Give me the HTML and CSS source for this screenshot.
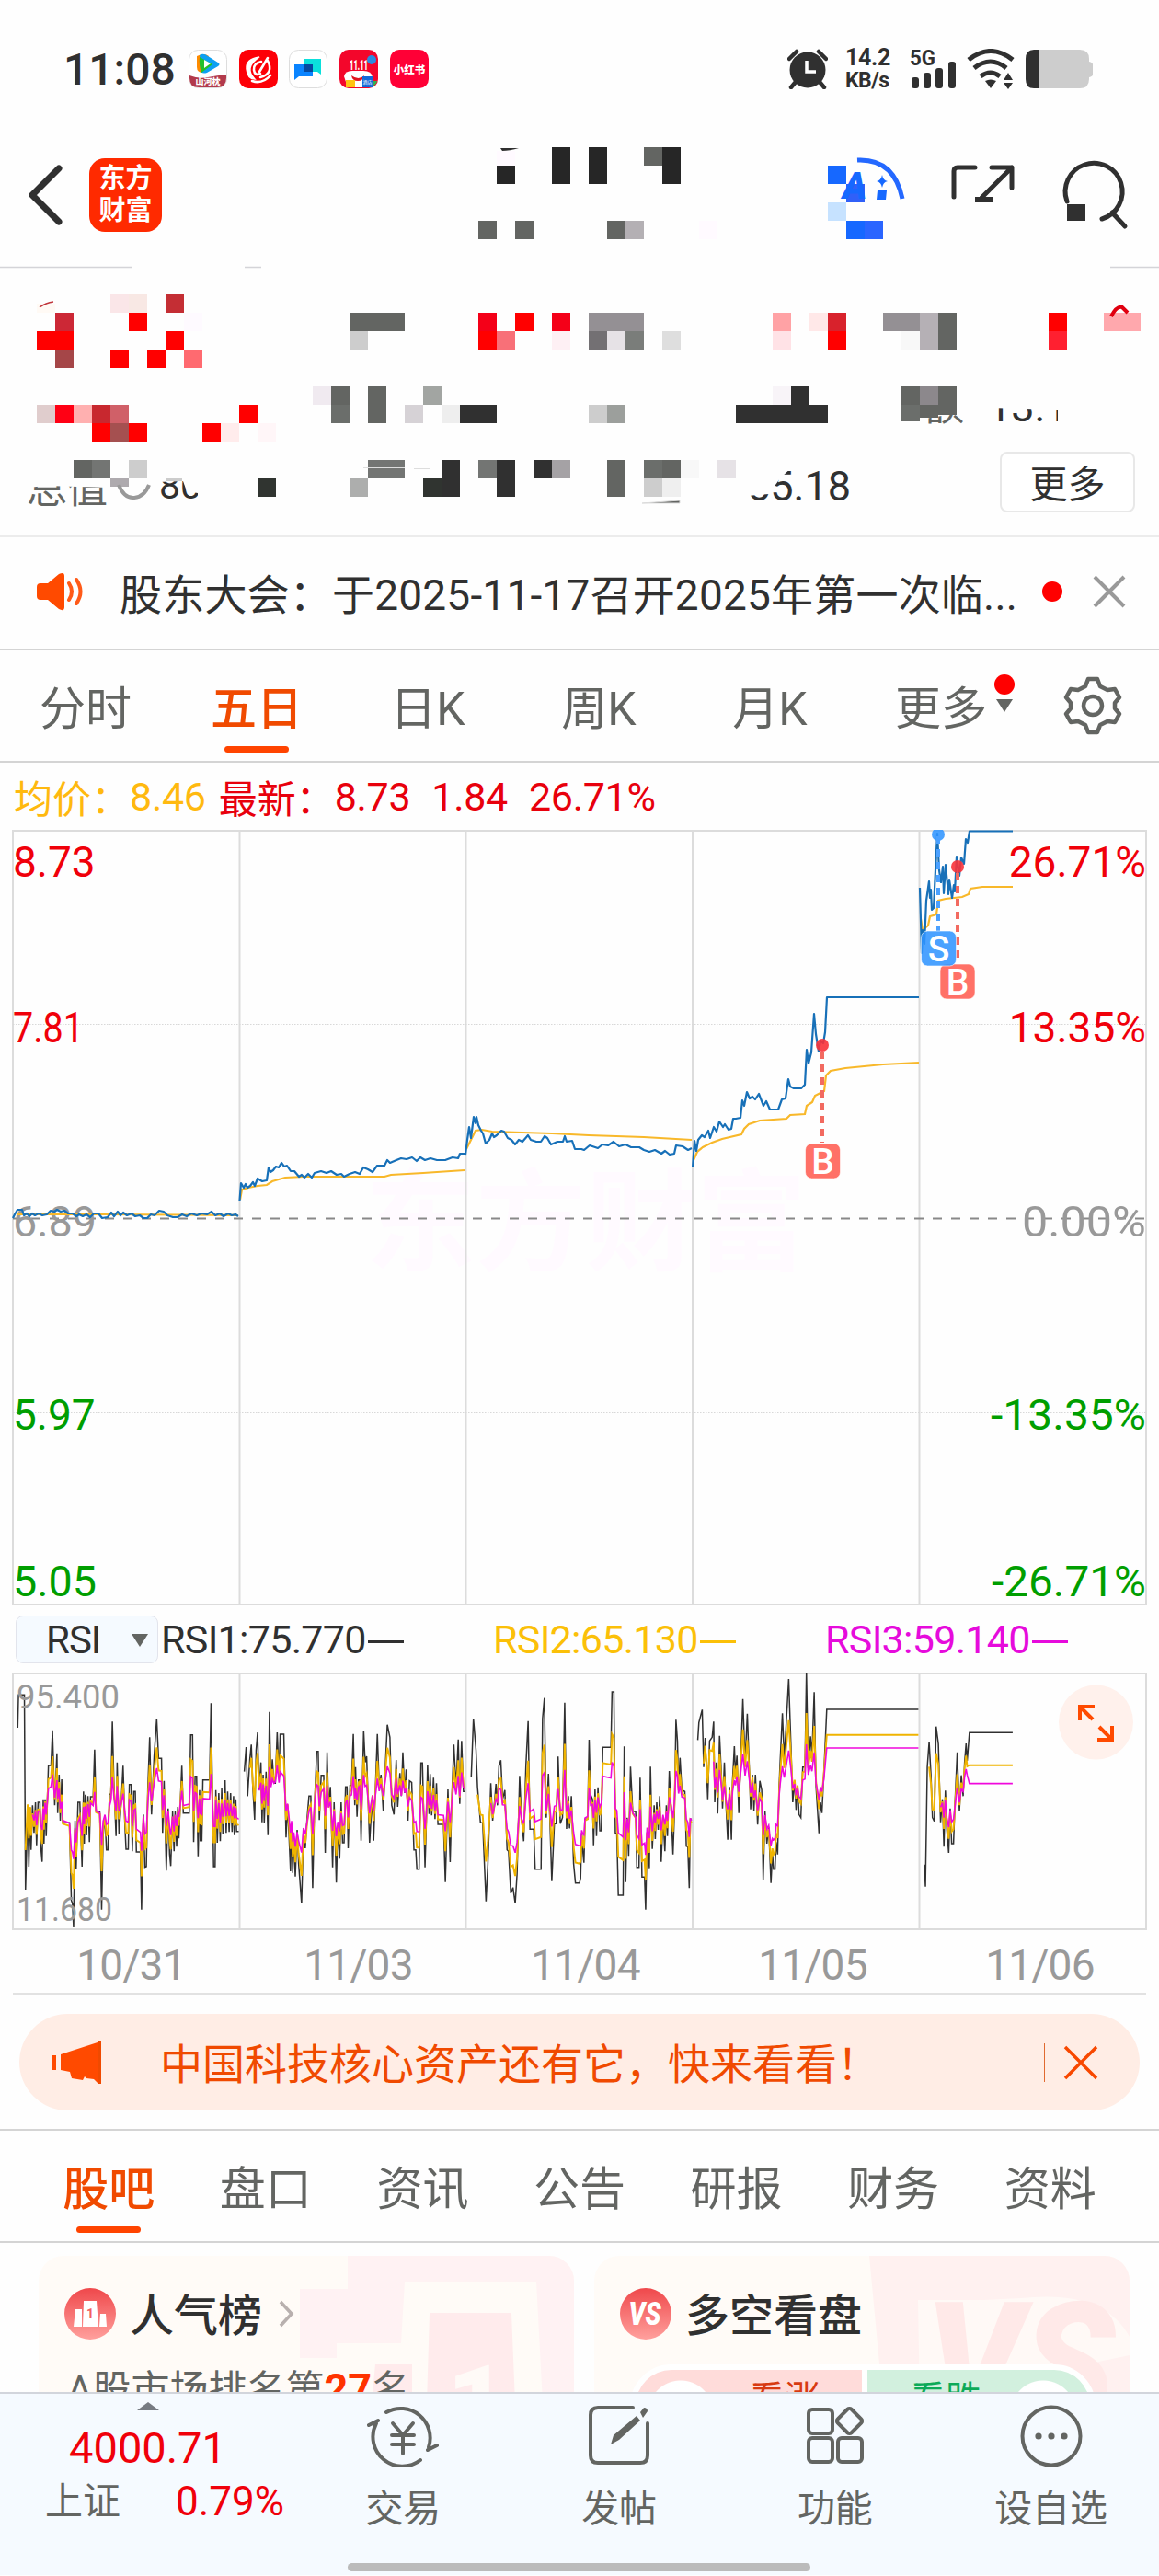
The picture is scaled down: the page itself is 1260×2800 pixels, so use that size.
FILE: index.html
```html
<!DOCTYPE html>
<html lang="zh-CN">
  <head>
    <meta charset="UTF-8" />
    <meta name="viewport" content="width=device-width, initial-scale=1.0" />
    <title>东方财富</title>
    <link rel="stylesheet" href="styles.css">
  </head>
  <body>
    <!-- status bar -->
    <div class="status">
      <span class="time">11:08</span>
      <div class="apps">
        <svg class="app" viewBox="0 0 42 42">
          <rect x=".5" y=".5" width="41" height="41" rx="10" fill="#fff" stroke="#ddd" />
          <path d="M1 28q10 4 20 2t20-3v4q0 10-10 10H11Q1 41 1 31z" fill="#b23a4c" />
          <path d="M9 7q8-4 13 0l-6 18q-7 0-7-6z" fill="#ff8a00" />
          <path d="M12 6q4-3 9 1l11 7q3 2 0 4l-12 7q-7 2-7-4z" fill="#0da0f2" />
          <path d="M12 8l14 8-12 9q-3-9-2-17z" fill="#22c02c" />
          <path d="M17 11l7 4-7 5z" fill="#fff" />
          <text x="21" y="38" text-anchor="middle" font-size="9" font-weight="900" fill="#fff">山河枕</text>
        </svg>
        <svg class="app" viewBox="0 0 42 42">
          <rect width="42" height="42" rx="10" fill="#fd0007" />
          <path d="M22 8Q7 10 8 21t9 11q-6-6-5-12T22 8z" fill="#fff" stroke="#fff" stroke-width="1.500" />
          <path d="M31 12q7 14-8 18M14 34q11 4 20-6M31 9L22 24M24 13q-9 2-8 9t7 4" fill="none" stroke="#fff" stroke-width="2.600" stroke-linecap="round" />
        </svg>
        <svg class="app" viewBox="0 0 42 42">
          <rect x=".5" y=".5" width="41" height="41" rx="10" fill="#fff" stroke="#ddd" />
          <path d="M16 10h19v17l-4-3H16z" fill="#0be0dc" />
          <path d="M6 16h20v13H11l-5 4z" fill="#0a84ff" />
          <rect x="16" y="16" width="10" height="8" fill="#0549a0" />
        </svg>
        <svg class="app" viewBox="0 0 42 42">
          <rect width="42" height="42" rx="10" fill="#f3062b" />
          <circle cx="35" cy="11" r="5" fill="#2a8be0" />
          <path d="M5 29q1-6 9-6h12q9 0 10 7l-3 11H9z" fill="#fff" />
          <path d="M13 28q8 6 14 0q-1 6-7 6t-7-6z" fill="#e0151f" />
          <text x="21" y="22" text-anchor="middle" font-size="14" font-weight="900" fill="#fff" textLength="20" lengthAdjust="spacingAndGlyphs">11.11</text>
          <rect x="7" y="33" width="10" height="8" fill="#ffc312" />
          <rect x="25" y="29" width="11" height="12" fill="#1268d8" />
          <text x="30.500" y="37" text-anchor="middle" font-size="5" fill="#fff">酒店</text>
          <path d="M36 34h5q-1 4-5 6z" fill="#30b050" />
        </svg>
        <svg class="app" viewBox="0 0 42 42">
          <rect width="42" height="42" rx="10" fill="#ff0036" />
          <text x="21" y="26" text-anchor="middle" font-size="11.500" font-weight="900" fill="#fff">小红书</text>
        </svg>
      </div>
      <svg class="alarm" width="44" height="44" viewBox="0 0 44 44">
        <ellipse cx="22" cy="23" rx="19.500" ry="19.500" fill="#303030" />
        <path d="M2 11l8-8M34 3l8 8M9 36l-5 6M35 36l5 6" stroke="#303030" stroke-width="4.500" stroke-linecap="round" />
        <path d="M21 13v12h10" fill="none" stroke="#fff" stroke-width="3.500" />
      </svg>
      <div class="speed"><span>14.2</span><span>KB/s</span></div>
      <svg class="signal" width="52" height="52" viewBox="0 -4 52 52">
        <text x="0" y="18" font-size="23" font-weight="700" fill="#303030" textLength="28" lengthAdjust="spacingAndGlyphs">5G</text>
        <g fill="#303030">
          <rect x="2" y="31" width="8" height="12" rx="3" /><rect x="15" y="26" width="8" height="17" rx="3" />
          <rect x="28" y="21" width="8" height="22" rx="3" /><rect x="42" y="14" width="8" height="29" rx="3" />
        </g>
      </svg>
      <svg class="wifi" width="52" height="44" viewBox="0 0 52 44">
        <path d="M2 12q24-19 48 0M8 21q18-14 35 0M15 30q11-8 21 0" fill="none" stroke="#303030" stroke-width="5" />
        <path d="M20 35q6-3 12 0l-6 8zM45 26l5 8H40zM45 44l5-7H40z" fill="#303030" />
      </svg>
      <svg class="battery" width="76" height="44" viewBox="0 0 76 44">
        <path d="M10 1h50q10 0 10 10v3q4 1 4 3v11q0 2-4 3v2q0 10-10 10H10z" fill="#cdcdcd" />
        <path d="M16 1v42h-6Q1 43 1 33V11Q1 1 10 1z" fill="#303030" />
      </svg>
    </div>

    <!-- title bar -->
    <header class="topbar">
      <svg class="back" width="38" height="66" viewBox="0 0 38 66"><path d="M34 4L5 33l29 29" fill="none" stroke="#303030" stroke-width="7" stroke-linecap="round" stroke-linejoin="round" /></svg>
      <div class="logo"><span>东方</span><span>财富</span></div>
      <svg class="actions" width="340" height="90" viewBox="900 165 340 90">
        <path d="M932 172q40-2 49 42" fill="none" stroke="#2468ff" stroke-width="5" />
        <path d="M959 188q1 6 6 7q-5 1-6 7q-1-6-6-7q5-1 6-7zM954 205h10l-1 10h-10z" fill="#1668ff" />
        <g fill="none" stroke="#303030" stroke-width="5" stroke-linecap="round" stroke-linejoin="round">
          <path d="M1037 212v-28q0-4 4-4h19M1078 180h22v22M1100 180l-33 33" />
          <path d="M1160 217a31 31 0 1 1 38 19M1209 229l14 15" />
        </g>
      </svg>
    </header>

    <!-- quote block -->
    <section class="quote">
      <button class="more">更多</button>
    </section>

    <section class="notice">
      <svg width="52" height="44" viewBox="0 0 52 44">
        <path d="M4 13h8L24 3q6-3 6 2v34q0 5-6 2l-12-10H4q-4 0-4-4V17q0-4 4-4z" fill="#ff4a00" />
        <path d="M35 13q6 9 0 18M43 9q9 13 0 26" fill="none" stroke="#ff5a18" stroke-width="4" stroke-linecap="round" />
      </svg>
      <p>股东大会：于2025-11-17召开2025年第一次临...</p>
      <i class="dot"></i>
      <svg class="close" width="36" height="36" viewBox="0 0 36 36"><path d="M2 2l32 32M34 2L2 34" stroke="#999" stroke-width="4" /></svg>
    </section>

    <nav class="periods">
      <a>分时</a>
      <a class="active">五日</a>
      <a>日K</a>
      <a>周K</a>
      <a>月K</a>
      <a class="drop">更多<i class="dot"></i></a>
      <svg width="64" height="64" viewBox="0 0 64 64">
        <path d="M27 3h10l3 8 8 4 8-1 5 9-5 6v6l5 6-5 9-8-1-8 4-3 8H27l-3-8-8-4-8 1-5-9 5-6v-6l-5-6 5-9 8 1 8-4z" fill="none" stroke="#636562" stroke-width="4.500" stroke-linejoin="round" />
        <circle cx="32" cy="32" r="10" fill="none" stroke="#636562" stroke-width="4.500" />
      </svg>
    </nav>

    <div class="info">
      <span class="avg">均价：</span><span class="avg num">8.46</span>
      <span>最新：</span><span class="num">8.73</span><span class="num">1.84</span><span class="num">26.71%</span>
    </div>

    <!-- five day price chart -->
    <svg class="chart" width="1260" height="843" viewBox="0 903 1260 843">
      <text class="mark" x="397" y="1373">东方财富</text>
      <path class="grid" d="M14 904H1246V1745H14zM260.500 904V1745M506.500 904V1745M753 904V1745M999.500 904V1745" />
      <path class="dots" d="M14 1114.500H1246M14 1536.500H1246" />
      <path class="zero" d="M14 1325.500H1246" />
      <g class="label">
        <text class="up" x="14" y="954">8.73</text>
        <text class="up" x="14" y="1134" textLength="77" lengthAdjust="spacingAndGlyphs">7.81</text>
        <text x="14" y="1345" textLength="91" lengthAdjust="spacingAndGlyphs">6.89</text>
        <text class="down" x="14" y="1555">5.97</text>
        <text class="down" x="14" y="1736" textLength="91" lengthAdjust="spacingAndGlyphs">5.05</text>
      </g>
      <g class="label right">
        <text class="up" x="1246" y="954">26.71%</text>
        <text class="up" x="1246" y="1134">13.35%</text>
        <text x="1246" y="1345" textLength="135" lengthAdjust="spacingAndGlyphs">0.00%</text>
        <text class="down" x="1246" y="1555" textLength="169" lengthAdjust="spacingAndGlyphs">-13.35%</text>
        <text class="down" x="1246" y="1736" textLength="168" lengthAdjust="spacingAndGlyphs">-26.71%</text>
      </g>
      <g class="avgline">
        <path d="M18 1321H110L200 1321.500 259 1322" />
        <path d="M261 1305L263 1294 270 1292 280 1290 290 1289 296 1285 310 1281 330 1280H418L425 1278 460 1276 505 1273" />
        <path d="M507 1250L512 1240 517 1230 524 1229 535 1231 600 1233 640 1235 700 1237 752 1240" />
        <path d="M754 1262L758 1253 764 1248 774 1243 785 1239 806 1234 809 1228 814 1223 826 1219 855 1217 859 1213 875 1212 877 1203 883 1199 886 1192 896 1187 898 1170 903 1165 919 1162 960 1158 999 1156" />
        <path d="M1001 1000L1003 1012 1009 1007 1011 997 1018 995 1020 980 1028 978 1046 976 1053 973 1055 967 1068 965H1101" />
      </g>
      <g class="price">
        <path d="M14 1325L16 1321 19 1316 24 1316 26 1322 29 1320 32 1323 35 1320 38 1322 42 1320 46 1322 51 1321 55 1317 59 1318 62 1316 66 1318 70 1317 74 1320 79 1320 83 1323 86 1321 90 1323 94 1321 98 1324 102 1320 107 1320 111 1325 117 1324 121 1319 124 1323 128 1318 131 1322 134 1319 138 1322 143 1320 147 1323 152 1322 156 1325 160 1325 164 1321 168 1322 173 1317 178 1318 182 1322 188 1324 193 1324 198 1321 203 1323 208 1320 214 1322 219 1320 225 1321 230 1318 234 1322 239 1320 243 1323 248 1320 252 1322 256 1321 259 1323" />
        <path d="M260.500 1306L262 1287 265 1292 267 1288 269 1292 272 1290 275 1286 277 1290 280 1282 285 1285 290 1284 292 1270 294 1275 297 1273 300 1269 303 1270 306 1265 309 1269 312 1268 316 1274 320 1274 325 1280 328 1278 331 1281 335 1277 339 1281 342 1276 349 1274 355 1276 360 1274 366 1278 371 1277 374 1280 380 1277 386 1275 391 1277 395 1270 400 1272 405 1275 410 1268 418 1268 421 1262 424 1265 431 1262 436 1260 442 1261 448 1259 453 1263 457 1259 462 1262 468 1260 475 1262 484 1262 492 1259 498 1260 500 1255 506 1255" />
        <path d="M506 1256L508 1240 510 1226 512 1238 515 1215 517 1222 518 1215 520 1224 523 1230 525 1233 528 1244 532 1240 535 1233 537 1237 540 1235 545 1230 548 1231 552 1238 556 1240 560 1245 564 1240 568 1242 574 1235 577 1240 583 1242 588 1242 592 1236 595 1238 599 1245 606 1242 612 1242 614 1236 616 1242 622 1241 625 1250 632 1250 635 1251 641 1246 650 1249 655 1245 661 1246 667 1242 673 1247 680 1245 686 1248 695 1248 700 1251 706 1253 712 1251 719 1255 723 1252 728 1256 733 1255 735 1246 742 1247 748 1251 752 1249" />
        <path d="M753 1270L755 1241 757 1252 759 1240 763 1235 766 1237 770 1230 772 1238 776 1226 779 1231 782 1220 786 1226 788 1223 792 1229 795 1228 797 1217 800 1217 805 1216 807 1197 809 1203 812 1188 815 1195 818 1193 821 1196 825 1190 830 1203 833 1198 837 1207 846 1207 850 1196 854 1195 857 1174 859 1182 863 1184 871 1184 875 1180 877 1142 879 1157 882 1145 885 1103 887 1125 890 1144 892 1132 895 1135 897 1123 899 1085H999" />
        <path d="M1000 966L1002 1037 1003 1012 1005 1027 1007 980 1010 959 1011 977 1012 968 1013 990 1015 988 1017 947 1019 907 1021 947 1023 960 1025 943 1026 972 1028 941 1031 973 1032 957 1035 977 1037 963 1038 970 1040 932 1043 953 1045 933 1048 940 1050 913 1052 917 1054 904.500H1101" />
      </g>
      <g class="trade buy">
        <circle cx="894" cy="1137" r="7" /><path d="M894 1144V1243" />
        <rect x="875.500" y="1244" width="38" height="38" rx="7" /><text x="894.500" y="1277">B</text>
      </g>
      <g class="trade buy">
        <circle cx="1041" cy="943" r="7" /><path d="M1041 950V1047" />
        <rect x="1022" y="1049" width="38" height="38" rx="7" /><text x="1041" y="1082">B</text>
      </g>
      <g class="trade sell">
        <circle cx="1020" cy="908" r="7" /><path d="M1020 910V1013" />
        <rect x="1001.500" y="1013" width="38" height="38" rx="7" /><text x="1020.500" y="1046">S</text>
      </g>
    </svg>

    <div class="rsi-bar">
      <span class="pick">RSI</span>
      <span class="r1">RSI1:75.770<b></b></span>
      <span class="r2">RSI2:65.130<b></b></span>
      <span class="r3">RSI3:59.140<b></b></span>
    </div>

    <div class="rsi">
      <svg width="1260" height="280" viewBox="0 0 1260 280">
        <path class="grid" d="M14 1H1246V279H14zM260.500 1V279M506.500 1V279M753 1V279M999.500 1V279" />
        <svg id="rsiLines" width="1260" height="280" viewBox="0 267 3136 840" preserveAspectRatio="none"></svg>
        <text x="18" y="39" textLength="112" lengthAdjust="spacingAndGlyphs">95.400</text>
        <text x="18" y="270" textLength="104" lengthAdjust="spacingAndGlyphs">11.680</text>
        <circle cx="1191.500" cy="54" r="40.500" fill="#fff1ec" />
        <path d="M1174 52V37h16M1174 37l14 14M1209 58v15h-16M1209 73l-14-14" fill="none" stroke="#ff4a00" stroke-width="4" />
      </svg>
    </div>
    <div class="dates"><span>10/31</span><span>11/03</span><span>11/04</span><span>11/05</span><span>11/06</span></div>

    <div class="ad">
      <svg width="54" height="46" viewBox="0 0 54 46">
        <path d="M0 15h5v16H0zM10 14L50 1V45L46 41 38 40 36 38 34 42 22 40 20 33 10 31z" fill="#ff4a00" /><path d="M50 0h4v46h-4z" fill="#f04a00" />
      </svg>
      <p>中国科技核心资产还有它，快来看看！</p>
      <i></i>
      <svg width="38" height="38" viewBox="0 0 38 38"><path d="M2 2l34 34M36 2L2 36" stroke="#f84800" stroke-width="3.500" /></svg>
    </div>

    <nav class="tabs">
      <a class="active">股吧</a><a>盘口</a><a>资讯</a><a>公告</a><a>研报</a><a>财务</a><a>资料</a>
    </nav>

    <section class="cards">
      <div class="card">
        <svg class="deco" width="320" height="160" viewBox="304 2452 320 160">
          <path d="M378 2452H624V2612H590L583 2480H440L436 2547H366V2563H326V2488H378z" fill="#fff2f3" />
          <path d="M467 2514H556L560 2612H464zM408 2570H448V2612H404z" fill="#ffebec" />
          <text x="486" y="2650" font-size="112" font-weight="900" fill="#fffaf7">1</text>
        </svg>
        <div class="head">
          <svg width="56" height="56" viewBox="0 0 56 56">
            <circle cx="28" cy="28" r="28" fill="url(#red)" />
            <path d="M12 23h7v19h-9zM21 14h14l2 28H20zM39 28h6l1 14h-8z" fill="#fff" />
            <text x="28" y="33" text-anchor="middle" font-size="14" font-weight="700" fill="#f26060">1</text>
            <defs><linearGradient id="red" x2="0" y2="1"><stop stop-color="#ef484b" /><stop offset="1" stop-color="#ffa09d" /></linearGradient></defs>
          </svg>
          <h3>人气榜</h3>
          <svg class="arrow" width="18" height="30" viewBox="0 0 18 30"><path d="M3 2l12 13L3 28" fill="none" stroke="#b8b0ae" stroke-width="3.500" /></svg>
        </div>
        <p>A股市场排名第<b>27</b>名</p>
      </div>
      <div class="card">
        <svg class="deco" width="320" height="160" viewBox="908 2452 320 160">
          <path d="M945 2452H1228V2612H960z" fill="#fff1f0" />
          <path d="M998 2500H1070L1110 2498Q1200 2488 1228 2540V2560L1180 2570 1190 2612H1000z" fill="#fff9f6" />
          <text x="1006" y="2630" font-size="180" font-weight="900" font-style="italic" fill="#ffe9e8" textLength="206" lengthAdjust="spacingAndGlyphs">VS</text>
        </svg>
        <div class="head">
          <svg width="56" height="56" viewBox="0 0 56 56">
            <circle cx="28" cy="28" r="28" fill="url(#red)" />
            <text x="27" y="40" text-anchor="middle" font-size="35" font-weight="900" font-style="italic" fill="#fff" textLength="35" lengthAdjust="spacingAndGlyphs">VS</text>
          </svg>
          <h3>多空看盘</h3>
        </div>
        <div class="vote"><span class="rise">看涨</span><span class="fall">看跌</span></div>
      </div>
    </section>

    <footer class="bottom">
      <div class="index">
        <i></i>
        <strong>4000.71</strong>
        <div><span>上证</span><em>0.79%</em></div>
      </div>
      <a>
        <svg width="78" height="68" viewBox="0 0 78 68">
          <path d="M21 8A32 32 0 0 1 67 46M58 60A32 32 0 0 1 10 20M2 22l10-5M76 44l-10 5" />
          <path d="M28 20l11 13 11-13M39 33v20M27 33h24M27 43h24" />
        </svg>
        交易
      </a>
      <a>
        <svg width="78" height="68" viewBox="0 0 78 68">
          <path d="M54 3H16Q8 3 8 11V55Q8 63 16 63H62Q70 63 70 55V20" />
          <path d="M30 43l3-10L58 12l4 5L39 38zM62 8l4-5q4 0 4 4l-5 7z" fill="#636562" stroke="none" />
        </svg>
        发帖
      </a>
      <a>
        <svg width="78" height="68" viewBox="0 0 78 68">
          <rect x="10" y="5" width="26" height="26" rx="4" /><rect x="10" y="36" width="26" height="26" rx="4" /><rect x="42" y="36" width="26" height="26" rx="4" />
          <rect x="44" y="7" width="21" height="21" rx="3" transform="rotate(45 54.500 17.500)" />
        </svg>
        功能
      </a>
      <a>
        <svg width="78" height="68" viewBox="0 0 78 68">
          <circle cx="39" cy="34" r="31.500" />
          <g fill="#636562" stroke="none"><circle cx="25" cy="34" r="3.600" /><circle cx="39" cy="34" r="3.600" /><circle cx="53" cy="34" r="3.600" /></g>
        </svg>
        设自选
      </a>
      <div class="homebar"></div>
    </footer>

    <!-- privacy blocks over the title and quote -->
    <svg class="mosaic" width="1260" height="580" viewBox="0 0 1260 580">
      <defs>
        <clipPath id="c1"><path d="M30 530L50 528 120 530V560H30z" /></clipPath>
        <clipPath id="c2"><path d="M170 524L199 523 203 534 215 536V546H170z" /></clipPath>
        <clipPath id="c3"><path d="M812 539L836 537 848 520 864 505H930V550H812z" /></clipPath>
        <clipPath id="c4"><path d="M1005 455L1037 450 1047 452H1047V464H1005zM1075 444L1150 446V462H1075z" /></clipPath>
      </defs>
      <path d="M0 290.500H143M266 290.500H284M1207 290.500H1260" stroke="#d4d4d8" stroke-width="1.500" />
      <g id="blocks"></g>
      <text x="916" y="216" font-size="40" font-weight="900" font-style="italic" fill="#1668ff">A</text>
      <path d="M540 158l4 5zM544 161h20q-10 3-18 3z" fill="#303030" />
      <path d="M43 334q7-5 15-6" fill="none" stroke="#c0343a" stroke-width="1.500" />
      <path d="M1208 344q6-12 12-10l6 6" fill="none" stroke="#e00010" stroke-width="4" />
      <path d="M129 527q6 15 17 14t16-14" fill="none" stroke="#999" stroke-width="4" />
      <text x="29" y="547" font-size="44" fill="#636562" clip-path="url(#c1)">总值</text>
      <text x="173" y="542" font-size="41" fill="#303030" clip-path="url(#c2)">80</text>
      <text x="812" y="544" font-size="45" fill="#303030" clip-path="url(#c3)">55.18</text>
      <g clip-path="url(#c4)" fill="#303030"><text x="1004" y="457" font-size="44" fill="#636562">额</text><text x="1074" y="458" font-size="45">13.1</text></g>
      <path d="M698 547l41-3v3zM395 508.500h45M450 509.500h18" fill="#636562" stroke="#ddd" />
    </svg>

    <script>
      // x, y, width, height, color
      const blocks = [
        [540, 164, 20, 16, "#fffaff"], [540, 180, 20, 20, "#262626"], [600, 160, 20, 40, "#262626"],
        [640, 160, 20, 40, "#262626"], [700, 160, 20, 20, "#636562"], [720, 160, 20, 40, "#262626"],
        [520, 240, 20, 20, "#636562"], [560, 240, 20, 20, "#636562"], [660, 240, 20, 20, "#636562"],
        [680, 240, 20, 20, "#b4b0b4"], [760, 240, 20, 20, "#fffaff"],
        [900, 180, 20, 20, "#1668ff"], [920, 200, 20, 20, "#3060f8"], [900, 220, 20, 20, "#c6e2ff"],
        [920, 240, 20, 20, "#1668ff"], [940, 240, 20, 20, "#2b65ff"],
        [1060, 214, 20, 6, "#303030"], [1160, 222, 20, 18, "#303030"],
        [40, 330, 20, 10, "#fffaf5"], [120, 320, 20, 20, "#fae6e8"], [140, 320, 20, 20, "#f8e8e4"], [180, 320, 20, 20, "#c42e34"],
        [60, 340, 20, 20, "#cc2836"], [140, 340, 20, 20, "#f00"], [200, 340, 20, 20, "#fefaff"],
        [40, 360, 40, 20, "#f00"], [180, 360, 20, 20, "#f00"],
        [60, 380, 20, 20, "#a54648"], [120, 380, 20, 20, "#f00"], [160, 380, 20, 20, "#f00"], [200, 380, 20, 20, "#ff6a70"],
        [380, 340, 60, 20, "#636562"], [380, 360, 20, 20, "#cdcdcd"],
        [520, 340, 20, 20, "#f40018"], [560, 340, 20, 20, "#f00"], [600, 340, 20, 20, "#f40018"],
        [520, 360, 20, 20, "#f00"], [540, 360, 20, 20, "#f87078"], [600, 360, 20, 20, "#fef0f4"],
        [640, 340, 60, 20, "#949094"], [640, 360, 20, 20, "#737073"], [660, 360, 20, 20, "#e6e2e6"],
        [680, 360, 20, 20, "#7a7d7a"], [720, 360, 20, 20, "#dedede"],
        [840, 340, 20, 20, "#ffa2a5"], [880, 340, 20, 20, "#ffe8e8"], [900, 340, 20, 20, "#d8222c"],
        [840, 360, 20, 20, "#ffe2e6"], [900, 360, 20, 20, "#f00"],
        [960, 340, 40, 20, "#949094"], [980, 360, 20, 20, "#f8f8f8"], [1000, 340, 20, 40, "#b5b0b5"], [1020, 340, 20, 40, "#636562"],
        [1140, 340, 20, 20, "#f00"], [1140, 360, 20, 20, "#ff2030"], [1200, 340, 40, 20, "#ffa8ad"],
        [40, 440, 20, 20, "#e0cdcd"], [60, 440, 20, 20, "#ff0014"], [80, 440, 20, 20, "#ffb0b0"], [100, 440, 20, 20, "#c8282f"],
        [120, 440, 20, 20, "#d06068"], [260, 440, 20, 20, "#f00"],
        [100, 460, 20, 20, "#f00"], [120, 460, 20, 20, "#a55050"], [140, 460, 20, 20, "#f00"],
        [220, 460, 20, 20, "#f00"], [240, 460, 20, 20, "#ffecec"], [280, 460, 20, 20, "#fff6f8"],
        [340, 420, 20, 20, "#f0eaf0"], [360, 420, 20, 20, "#636562"], [360, 440, 20, 20, "#6b6e6b"], [400, 420, 20, 40, "#636562"],
        [440, 440, 20, 20, "#d6d2d6"], [460, 420, 20, 20, "#a2a5a2"], [480, 440, 20, 20, "#eee"], [500, 440, 40, 20, "#303030"],
        [640, 440, 20, 20, "#cdcdcd"], [660, 440, 20, 20, "#9c9f9c"],
        [840, 420, 20, 20, "#f8f4f8"], [860, 420, 20, 20, "#303030"], [800, 440, 100, 20, "#303030"],
        [980, 420, 20, 20, "#636562"], [1000, 420, 20, 20, "#8c888c"], [1020, 420, 20, 20, "#636562"],
        [980, 440, 20, 18, "#6b6e6b"], [1000, 440, 20, 14, "#636562"], [1020, 440, 20, 11, "#636562"],
        [80, 500, 20, 20, "#636562"], [100, 500, 20, 20, "#737573"], [140, 500, 20, 20, "#cdcdcd"], [120, 520, 20, 9, "#aeaaae"],
        [180, 520, 18, 3, "#ccc"], [280, 520, 20, 20, "#303430"],
        [400, 500, 40, 20, "#737573"], [380, 520, 20, 20, "#adaead"], [480, 500, 20, 40, "#303030"], [460, 520, 20, 20, "#303430"],
        [520, 500, 20, 20, "#737573"], [540, 500, 20, 40, "#303030"], [580, 500, 20, 20, "#303030"], [600, 500, 20, 20, "#a5a2a5"],
        [660, 500, 20, 40, "#636562"], [700, 500, 20, 20, "#6b6e6b"], [720, 500, 20, 20, "#636562"], [740, 500, 20, 20, "#f8f8f8"],
        [780, 500, 20, 20, "#e6e2e6"], [700, 520, 20, 20, "#cdcdcd"], [720, 520, 20, 20, "#efefef"],
      ];
      document.getElementById("blocks").innerHTML = blocks
        .map((b) => `<rect x="${b[0]}" y="${b[1]}" width="${b[2]}" height="${b[3]}" fill="${b[4]}" />`)
        .join("");

      // RSI1 for each day, as x,y pairs. RSI2 and RSI3 are smoothed from it
      const days = [
        { line: "48,447 50,340 66,340 69,975 75,715 78,900 82,710 84,845 88,700 92,790 96,690 99,830 103,690 108,690 110,830 114,884 117,680 119,825 122,680 125,800 131,570 138,570 142,455 148,700 154,530 156,725 160,600 163,750 167,615 170,757 188,757 193,1010 196,1020 199,1098 203,750 206,908 211,690 216,690 222,900 226,655 228,825 231,665 234,798 238,670 242,820 245,672 252,672 256,518 260,720 270,720 275,1040 279,800 284,735 288,845 292,845 296,665 300,662 304,427 308,620 314,800 317,560 322,793 328,690 333,571 338,765 341,843 347,843 350,632 355,632 358,850 362,655 366,655 369,852 380,852 383,1040 388,730 392,902 396,900 400,645 405,478 410,730 417,540 424,418 429,547 437,547 440,790 444,620 450,913 455,710 459,860 462,898 467,720 471,850 474,720 478,835 481,705 484,808 492,571 496,725 512,725 516,470 521,470 524,820 528,605 532,605 536,866 540,650 542,815 546,815 549,617 567,617 571,367 578,900 582,900 584,650 588,822 592,660 596,817 600,645 603,793 609,618 612,790 616,655 620,787 624,660 628,787 632,670 634,797 638,680 640,785 646,785", skip: 8 },
        { line: "661,590 666,510 670,670 676,550 680,502 684,640 689,747 693,520 697,462 701,650 706,560 709,755 712,600 715,757 720,590 725,797 729,395 733,633 737,550 741,628 745,628 750,462 755,600 758,468 768,468 774,805 778,700 782,800 786,915 789,760 792,920 795,800 799,932 804,780 808,890 816,1020 821,800 826,840 831,740 836,670 841,670 846,970 851,700 857,524 861,524 864,748 869,602 876,602 880,855 885,527 889,700 894,640 900,902 904,690 910,952 914,770 919,874 923,690 927,822 931,822 935,640 939,640 942,840 947,635 951,635 956,467 960,700 962,575 966,737 970,617 973,617 977,815 984,457 988,560 992,540 1000,822 1004,740 1008,680 1011,815 1016,640 1021,467 1026,640 1031,600 1037,718 1042,590 1048,437 1055,478 1060,700 1066,730 1072,552 1076,705 1082,595 1086,670 1090,527 1095,660 1099,583 1104,750 1108,620 1114,625 1120,845 1125,845 1128,908 1134,908 1139,562 1143,562 1150,902 1153,780 1157,568 1161,728 1164,598 1168,733 1173,610 1177,745 1181,628 1185,762 1200,762 1205,950 1212,648 1218,885 1223,660 1228,502 1234,640 1240,485 1244,695 1249,490 1254,655 1258,655", skip: 9 },
        { line: "1275,608 1281,418 1288,520 1292,640 1300,757 1306,757 1315,1013 1320,893 1328,628 1333,750 1338,690 1342,630 1346,700 1350,572 1355,553 1360,680 1366,650 1372,845 1376,850 1382,987 1388,968 1394,1020 1399,925 1406,604 1411,740 1417,817 1423,570 1429,425 1434,778 1444,778 1448,908 1464,908 1468,417 1473,350 1478,740 1484,597 1493,947 1500,760 1505,760 1510,541 1516,760 1522,740 1528,365 1533,777 1538,670 1541,775 1546,670 1552,890 1557,953 1568,953 1571,937 1574,790 1577,850 1580,887 1583,745 1590,745 1594,486 1598,665 1603,680 1606,830 1610,648 1614,800 1618,641 1623,783 1627,783 1631,511 1653,511 1656,330 1661,330 1665,790 1669,793 1673,993 1686,993 1689,508 1693,950 1697,740 1701,865 1706,574 1712,720 1720,720 1723,902 1729,902 1732,610 1737,934 1744,934 1747,1040 1751,787 1757,905 1760,574 1765,842 1770,700 1773,810 1777,690 1781,780 1785,670 1789,884 1794,740 1799,850 1803,700 1806,800 1811,588 1816,720 1821,860 1825,720 1829,421 1833,490 1836,640 1840,545 1845,650 1853,655 1857,833 1861,835 1865,970 1868,745 1871,745", skip: 8 },
        { line: "1888,487 1891,430 1900,388 1904,575 1908,480 1915,680 1920,490 1927,478 1931,427 1934,690 1938,560 1942,727 1947,473 1952,600 1955,710 1960,560 1964,690 1969,812 1974,640 1979,812 1982,620 1987,507 1990,600 1994,538 1999,725 2004,560 2010,353 2016,560 2022,401 2028,600 2031,713 2036,600 2040,717 2044,600 2050,763 2056,620 2061,650 2065,944 2070,720 2075,825 2080,770 2086,953 2090,857 2093,908 2097,908 2100,820 2104,860 2108,640 2111,555 2117,400 2122,550 2134,288 2140,500 2145,690 2150,620 2154,715 2158,640 2162,730 2167,740 2172,575 2178,575 2182,267 2187,577 2193,475 2197,540 2203,331 2208,640 2216,791 2220,690 2224,725 2229,600 2237,387 2485,387", skip: 8, end: [470, 513] },
        { line: "2501,893 2504,965 2509,575 2514,493 2519,600 2523,740 2528,752 2533,443 2539,500 2545,755 2550,680 2554,835 2558,652 2562,780 2567,855 2571,710 2575,825 2580,825 2584,690 2590,527 2596,720 2601,602 2606,670 2610,560 2614,498 2617,555 2623,463 2740,463", skip: 9, end: [569, 629] },
      ];

      // k: how much of each swing is kept, t: how much of the trend is kept
      const smooth = (pts, k, t) => {
        return pts.map((p, i) => {
          const near = pts.slice(Math.max(0, i - 5), i + 5);
          const avg = near.reduce((s, n) => s + n[1], 0) / near.length;
          return [p[0], 695 + (avg - 695) * t + (p[1] - avg) * k];
        });
      };
      const draw = (pts, cls) => `<polyline class="${cls}" points="${pts.join(" ")}" />`;

      let lines = ["", "", ""];
      days.forEach((day) => {
        const pts = day.line.split(" ").map((p) => p.split(",").map(Number));
        const mid = smooth(pts, 0.58, 0.9);
        const slow = smooth(pts, 0.32, 0.7);
        if (day.end) {
          for (let i = pts.length - 2; i < pts.length; i++) {
            mid[i][1] = day.end[0];
            slow[i][1] = day.end[1];
          }
        }
        lines[0] += draw(pts, "l1");
        lines[1] += draw(mid.slice(3), "l2");
        lines[2] += draw(slow.slice(day.skip), "l3");
      });
      document.getElementById("rsiLines").innerHTML = lines.join("");
    </script>
  </body>
</html>
```
FILE: styles.css
```css
* {
  box-sizing: border-box;
  margin: 0;
  padding: 0;
}
body {
  position: relative;
  width: 1260px;
  height: 2800px;
  overflow: hidden;
  background: #fefefe;
  color: #303030;
  font-family: Roboto, "Noto Sans CJK SC", sans-serif;
}
svg {
  display: block;
  flex: none;
}
i, em {
  font-style: normal;
}
.dot {
  width: 22px;
  height: 22px;
  border-radius: 50%;
  background: #f00;
}

/* status bar */
.status {
  height: 124px;
  padding: 26px 70px 0 69px;
  display: flex;
  align-items: center;
}
.time {
  width: 136px;
  font-size: 48px;
  font-weight: 500;
  white-space: nowrap;
}
.apps {
  display: flex;
  gap: 12.7px;
}
.app {
  width: 42px;
  height: 42px;
}
.alarm {
  margin-left: auto;
}
.speed {
  width: 50px;
  margin: 0 20px 0 19px;
  display: flex;
  flex-direction: column;
  font-size: 25px;
  font-weight: 700;
  line-height: 25px;
  letter-spacing: -0.3px;
}
.speed span:last-child {
  font-size: 23px;
  letter-spacing: -0.5px;
}
.wifi {
  margin: 0 11px 0 10px;
}

/* title bar */
.topbar {
  height: 166px;
  padding: 10px 20px 0 30px;
  display: flex;
  align-items: center;
}
.logo {
  width: 79px;
  height: 80px;
  margin-left: 29px;
  padding-top: 5px;
  border-radius: 17px;
  background: #ff2a00;
  color: #fff;
  display: flex;
  flex-direction: column;
  align-items: center;
  font-size: 29px;
  font-weight: 700;
  line-height: 35px;
}
.actions {
  margin-left: auto;
}
.mosaic {
  position: absolute;
  left: 0;
  top: 0;
  pointer-events: none;
}

.quote {
  height: 294px;
  padding: 0 26px 25px 0;
  border-bottom: 2px solid #ececec;
  display: flex;
  justify-content: flex-end;
  align-items: flex-end;
}
.more {
  width: 147px;
  height: 66px;
  border: 2px solid #e8e8e8;
  border-radius: 8px;
  background: #fff;
  color: #303030;
  font: 41px/56px "Noto Sans CJK SC", sans-serif;
  padding-bottom: 3px;
}

.notice {
  height: 123px;
  padding: 0 36px 4px 40px;
  border-bottom: 2px solid #d4d4d4;
  display: flex;
  align-items: center;
}
.notice p {
  width: 1003px;
  margin-left: 38px;
  font-size: 46px;
  letter-spacing: 0.2px;
  white-space: nowrap;
}
.notice .close {
  margin-left: auto;
}

/* period tabs */
.periods {
  height: 122px;
  border-bottom: 2px solid #d4d4d4;
  display: grid;
  grid-template-columns: repeat(6, 186px) 144px;
  align-items: center;
  justify-items: center;
}
.periods a, .tabs a {
  position: relative;
  height: 120px;
  color: #636562;
  font-size: 50px;
  line-height: 128px;
  white-space: nowrap;
}
.periods .active, .tabs .active {
  color: #f04a00;
  font-weight: 500;
}
.active::after {
  content: "";
  position: absolute;
  left: 50%;
  bottom: 9px;
  width: 70px;
  height: 7px;
  margin-left: -35px;
  border-radius: 4px;
  background: #ff4400;
}
.drop .dot {
  position: absolute;
  left: 108px;
  top: 26px;
}
.drop::after {
  content: "";
  position: absolute;
  left: 110px;
  top: 53px;
  border: 9px solid transparent;
  border-top: 14px solid #636562;
  border-bottom: 0;
}

.info {
  height: 73px;
  padding-left: 15px;
  display: flex;
  align-items: center;
  color: #e8000c;
  font-size: 42px;
  white-space: nowrap;
}
.info .num {
  margin-right: 23px;
  font-size: 43px;
  letter-spacing: -0.3px;
}
.info .avg {
  color: #ffb90f;
}
.info .avg.num {
  margin-right: 14px;
}

/* price chart */
.grid {
  fill: none;
  stroke: #dcdcdc;
  stroke-width: 2;
}
.dots {
  stroke: #d8d8d8;
  stroke-dasharray: 1.500 1.500;
}
.zero {
  stroke: #888;
  stroke-width: 2;
  stroke-dasharray: 10 10;
}
.mark {
  font-size: 120px;
  font-weight: 700;
  fill: #fffaff;
}
.label text {
  font-size: 46px;
  fill: #999;
}
.label .up {
  fill: #f0000a;
}
.label .down {
  fill: #009e00;
}
.right text {
  text-anchor: end;
}
.avgline path {
  fill: none;
  stroke: #f8b82a;
  stroke-width: 2.2;
}
.price path {
  fill: none;
  stroke: #1770b8;
  stroke-width: 2.2;
  stroke-linejoin: round;
}
.trade path {
  fill: none;
  stroke-width: 4;
  stroke-dasharray: 8 6;
}
.trade rect {
  stroke: #fff;
  stroke-opacity: 0.6;
}
.trade text {
  fill: #fff;
  font-size: 39px;
  font-weight: 500;
  text-anchor: middle;
}
.buy circle, .buy rect {
  fill: #ff6256;
  fill-opacity: 0.9;
}
.buy circle {
  fill: #f8333a;
}
.buy path {
  stroke: #f26a60;
}
.sell circle, .sell rect {
  fill: #2f94ff;
  fill-opacity: 0.87;
}
.sell path {
  stroke: #4aa0ff;
}

/* RSI */
.rsi-bar {
  height: 73px;
  padding: 1px 0 0 17px;
  display: flex;
  align-items: center;
  font-size: 43px;
  white-space: nowrap;
}
.pick {
  position: relative;
  width: 155px;
  height: 52px;
  padding-left: 32px;
  border: 1px solid #e2e4ec;
  border-radius: 8px;
  background: #f5faff;
  font-size: 42px;
  line-height: 52px;
  letter-spacing: -1px;
}
.pick::after {
  content: "";
  position: absolute;
  left: 125px;
  top: 19px;
  border: 9px solid transparent;
  border-top: 14px solid #636562;
  border-bottom: 0;
}
.r1, .r2, .r3 {
  width: 361px;
  margin-left: 3px;
  display: flex;
  align-items: center;
  letter-spacing: -0.7px;
}
.rsi-bar b {
  width: 39px;
  height: 3px;
  margin: 4px 0 0 2px;
  background: currentColor;
}
.r2, .r3 {
  margin-left: 0;
}
.r2 {
  color: #fbc008;
}
.r3 {
  color: #e60bdc;
}
.rsi {
  height: 280px;
}
.rsi text {
  font-size: 37px;
  fill: #999;
}
.l1, .l2, .l3 {
  fill: none;
  stroke: #303030;
  stroke-width: 1.5;
  vector-effect: non-scaling-stroke;
}
.l2 {
  stroke: #f0b400;
  stroke-width: 2;
}
.l3 {
  stroke: #f008dc;
  stroke-width: 1.6;
}
.dates {
  height: 70px;
  margin: 0 14px;
  padding-left: 5px;
  border-bottom: 2px solid #e2e2e2;
  display: grid;
  grid-template-columns: repeat(5, 247px);
  color: #999;
  font-size: 46px;
  line-height: 76px;
  letter-spacing: -0.8px;
  text-align: center;
}

.ad {
  height: 105px;
  margin: 21px 21px 20px;
  padding: 0 45px 0 35px;
  border-radius: 53px;
  background: #ffede5;
  color: #f04a00;
  display: flex;
  align-items: center;
}
.ad p {
  margin: -3px 0 0 64px;
  font-size: 46px;
  white-space: nowrap;
}
.ad i {
  width: 1px;
  height: 42px;
  margin: 0 20px 0 auto;
  background: #e06a30;
}

/* content tabs */
.tabs {
  height: 124px;
  padding: 0 33px;
  border-top: 2px solid #d4d4d4;
  border-bottom: 2px solid #d4d4d4;
  display: grid;
  grid-template-columns: repeat(7, 1fr);
  justify-items: center;
}

.cards {
  height: 162px;
  padding: 14px 32px 0 42px;
  display: flex;
  gap: 22px;
  overflow: hidden;
}
.card {
  position: relative;
  width: 582px;
  height: 260px;
  border-radius: 27px;
  background: #fffbf7;
  overflow: hidden;
}
.deco {
  position: absolute;
  right: 0;
  top: 0;
}
.head {
  position: relative;
  height: 126px;
  padding-left: 28px;
  display: flex;
  align-items: center;
}
.head h3 {
  margin: -4px 0 0 15px;
  font-size: 48px;
  font-weight: 500;
}
.head .arrow {
  margin-left: 17px;
}
.card p {
  position: relative;
  padding-left: 31px;
  margin-top: -15px;
  color: #636562;
  font-size: 42px;
  white-space: nowrap;
}
.card b {
  color: #ff3300;
  font-size: 45px;
}
.vote {
  position: relative;
  width: 506px;
  height: 90px;
  margin: -8px 0 0 39px;
  border: 6px solid #fff;
  border-radius: 48px;
  display: flex;
  gap: 6px;
  overflow: hidden;
  font-size: 39px;
  line-height: 58px;
  background: #fff;
}
.vote .rise {
  width: 246px;
  padding: 3px 0 0 123px;
  background: radial-gradient(circle at 49px 47px, #fff 35px, transparent 36px) #ffdcda;
  color: #d83a10;
}
.vote .fall {
  width: 242px;
  padding: 3px 0 0 46px;
  background: radial-gradient(circle at 191px 47px, #fff 35px, transparent 36px) #d2f0de;
  color: #0caa58;
}

/* bottom bar */
.bottom {
  position: relative;
  height: 199px;
  border-top: 2px solid #d2d5dc;
  background: #f5faff;
  display: grid;
  grid-template-columns: 321px repeat(4, 1fr);
}
.index {
  padding-top: 9px;
  display: flex;
  flex-direction: column;
  align-items: center;
}
.index i {
  border: 12px solid transparent;
  border-top: 0;
  border-bottom: 9px solid #777b82;
}
.index strong {
  margin-top: 8px;
  color: #f0000a;
  font-size: 47px;
  font-weight: 400;
  line-height: 66px;
}
.index div {
  display: flex;
  gap: 60px;
  margin: -5px 0 0 37px;
  font-size: 41px;
  line-height: 60px;
  color: #636562;
}
.index em {
  color: #f0000a;
  font-size: 44px;
}
.bottom a {
  padding-top: 12px;
  display: flex;
  flex-direction: column;
  align-items: center;
  color: #636562;
  font-size: 41px;
  line-height: 60px;
}
.bottom a svg {
  margin-bottom: 15px;
  fill: none;
  stroke: #636562;
  stroke-width: 4;
  stroke-linecap: round;
}
.homebar {
  position: absolute;
  left: 378px;
  bottom: 4px;
  width: 503px;
  height: 9px;
  border-radius: 5px;
  background: #bbb;
}
```
